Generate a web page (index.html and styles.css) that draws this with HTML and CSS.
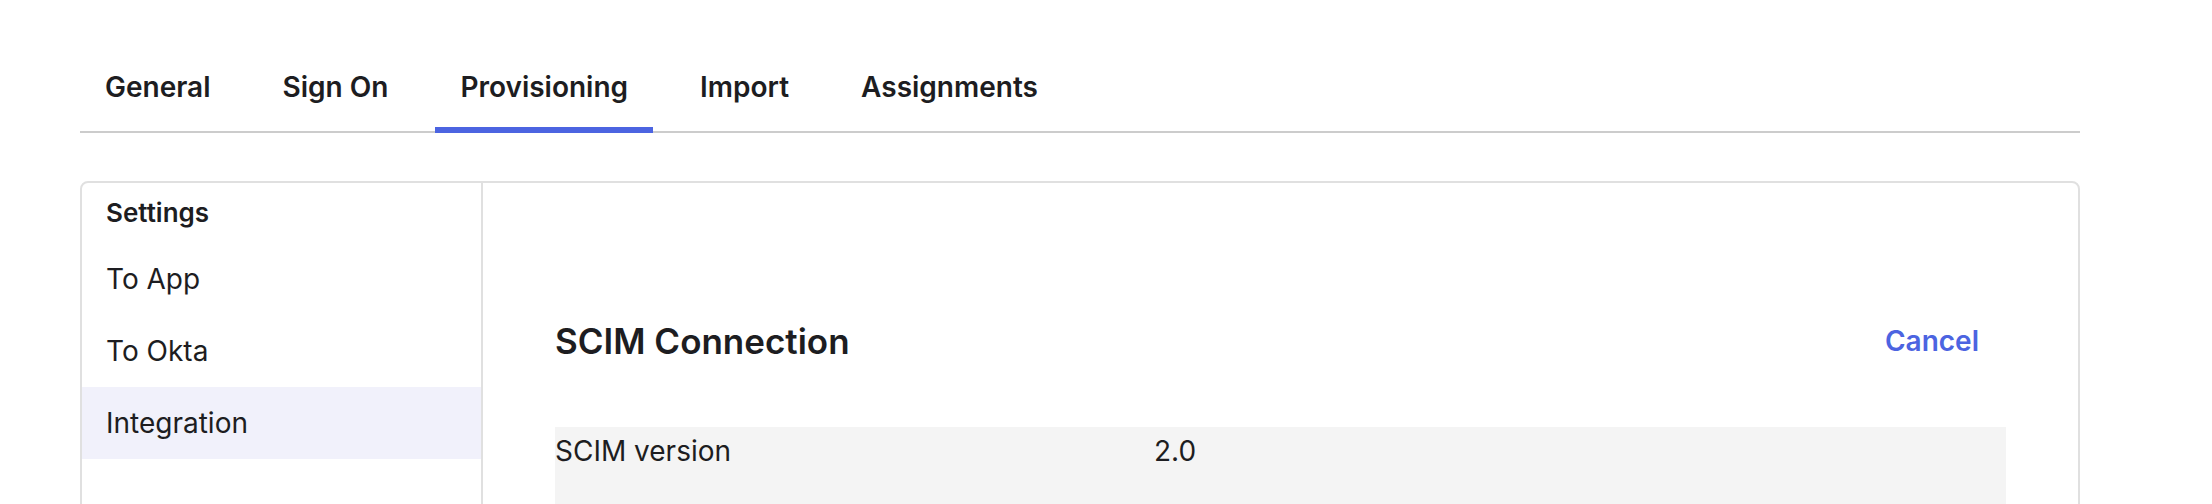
FILE: index.html
```html
<!DOCTYPE html>
<html lang="en">
<head>
<meta charset="utf-8">
<title>Provisioning</title>
<link rel="stylesheet" href="styles.css">
</head>
<body>
<div class="page">
  <nav class="tabs">
    <div class="tab">General</div>
    <div class="tab">Sign On</div>
    <div class="tab active">Provisioning</div>
    <div class="tab">Import</div>
    <div class="tab">Assignments</div>
  </nav>
  <section class="card">
    <aside class="sidebar">
      <div class="side-heading">Settings</div>
      <div class="side-item">To App</div>
      <div class="side-item">To Okta</div>
      <div class="side-item selected">Integration</div>
      <div class="side-fill"></div>
    </aside>
    <main class="main">
      <div class="main-header">
        <h2 class="title">SCIM Connection</h2>
        <button class="cancel">Cancel</button>
      </div>
      <div class="row">
        <div class="label">SCIM version</div>
        <div class="value">2.0</div>
      </div>
    </main>
  </section>
</div>
</body>
</html>
```

FILE: styles.css
```css
* { box-sizing: border-box; }
html, body { margin: 0; padding: 0; background: #ffffff; }
body {
  font-family: "Inter", "Noto Sans", sans-serif;
  color: #1d1d21;
  overflow: hidden;
}
.page {
  width: 2000px;
  margin-left: 80px;
}
.tabs {
  display: flex;
  gap: 22px;
  margin-top: 69px;
  border-bottom: 2px solid #cccccc;
}
.tab {
  padding: 0 25px 22px;
  font-size: 28px;
  line-height: 36px;
  font-weight: 600;
  color: #1d1d21;
  margin-bottom: -2px;
  border-bottom: 6px solid transparent;
}
.tab.active {
  border-bottom-color: #4c64e1;
}
.card {
  margin-top: 48px;
  border: 2px solid #e0e0e0;
  border-radius: 8px;
  display: flex;
  height: 400px;
}
.sidebar {
  width: 401px;
  border-right: 2px solid #e0e0e0;
  display: flex;
  flex-direction: column;
}
.side-heading {
  height: 60px;
  line-height: 60px;
  padding-left: 24px;
  font-size: 26px;
  font-weight: 600;
}
.side-item {
  height: 72px;
  line-height: 72px;
  padding-left: 24px;
  font-size: 28px;
  font-weight: 400;
}
.side-item.selected {
  background: #f1f1fb;
}
.main {
  flex: 1;
  padding: 134px 72px 0;
}
.main-header {
  display: flex;
  justify-content: space-between;
  align-items: center;
  height: 48px;
  margin-bottom: 62px;
}
.title {
  margin: 0;
  font-size: 35px;
  line-height: 48px;
  font-weight: 600;
}
.cancel {
  border: 0;
  background: none;
  font-family: inherit;
  font-size: 28px;
  font-weight: 600;
  color: #4c64e1;
  padding: 0 27px;
  line-height: 48px;
  cursor: pointer;
}
.row {
  display: grid;
  grid-template-columns: 599px 1fr;
  background: #f4f4f4;
  padding: 8px 0 80px;
  font-size: 28px;
  line-height: 32px;
}
```
